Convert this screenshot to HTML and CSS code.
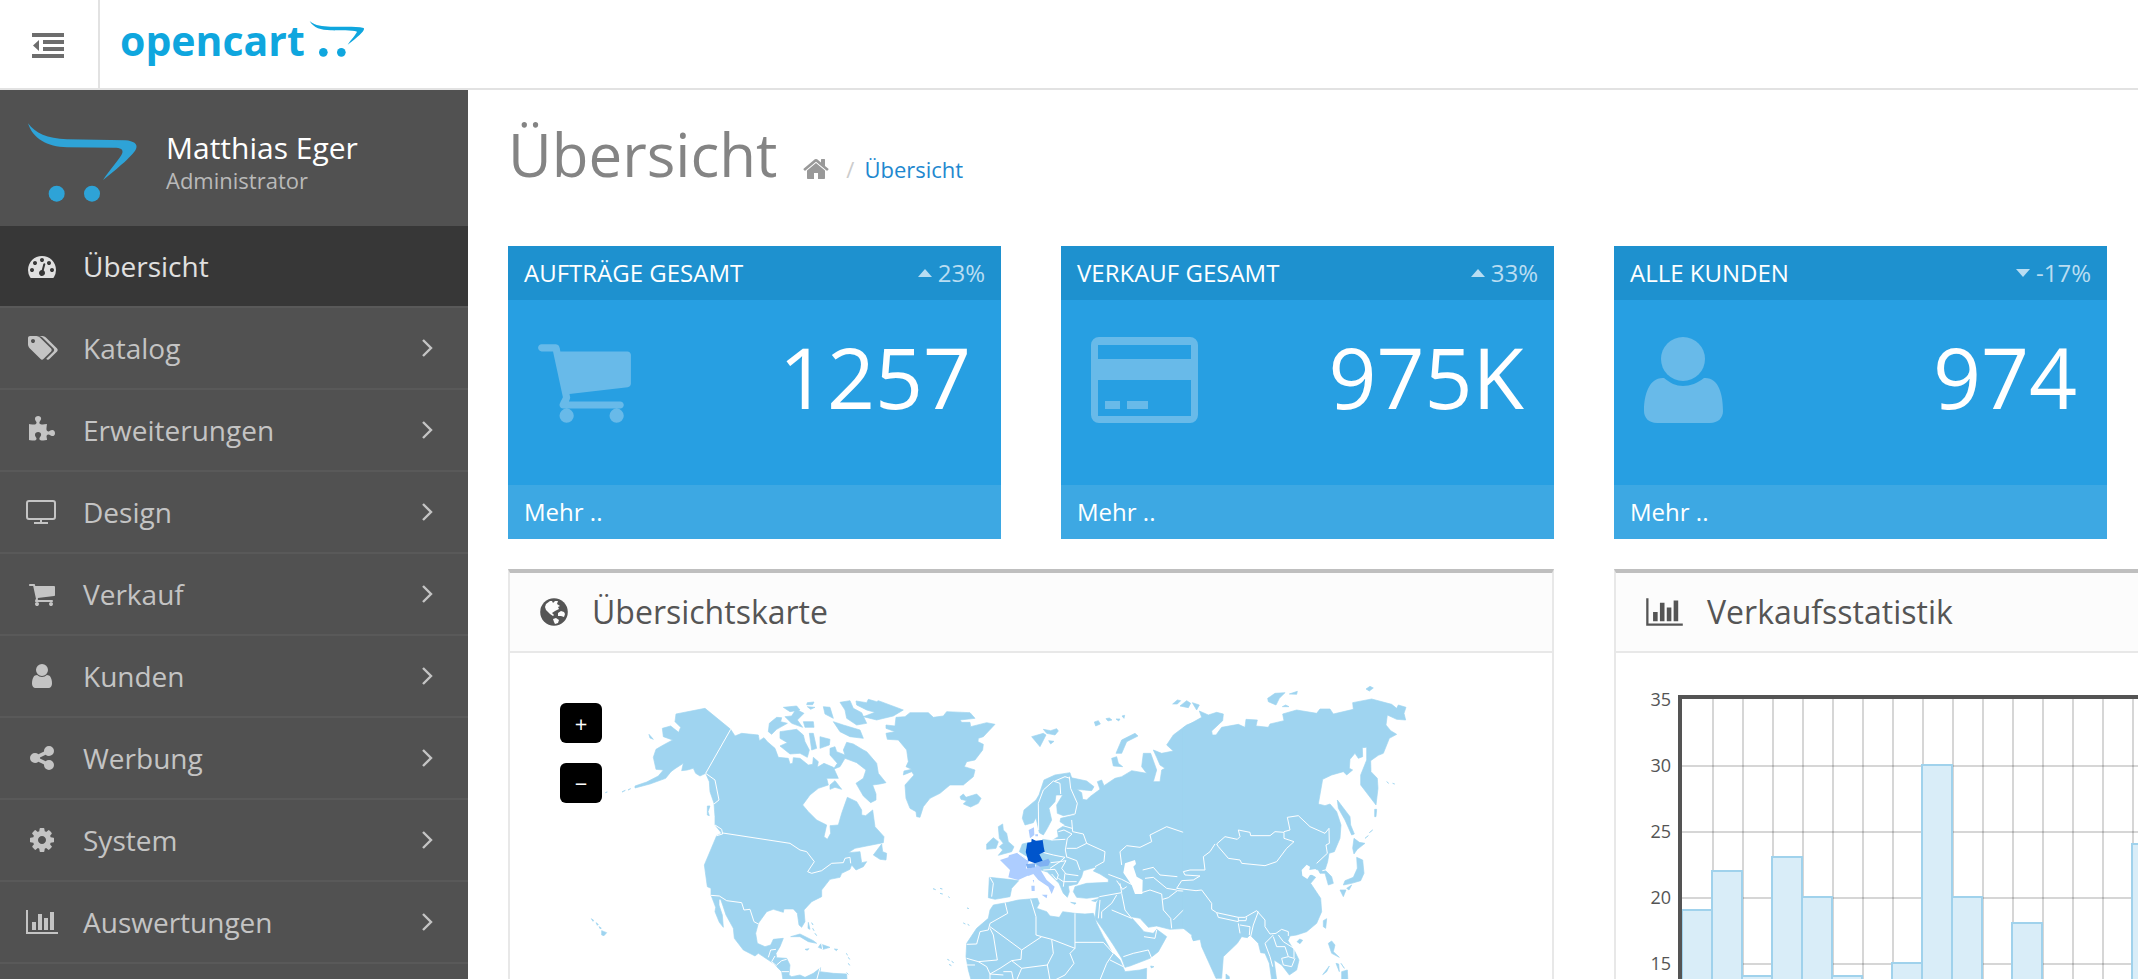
FILE: index.html
```html
<!DOCTYPE html>
<html lang="de">
<head>
<meta charset="utf-8">
<title>Übersicht</title>
<link rel="stylesheet" href="styles.css">
</head>
<body>
<svg class="sprite" aria-hidden="true">
  <symbol id="i-cart" viewBox="64 0 1664 1792"><path d="M704 1536q0 52-38 90t-90 38-90-38-38-90 38-90 90-38 90 38 38 90zm896 0q0 52-38 90t-90 38-90-38-38-90 38-90 90-38 90 38 38 90zm128-1088v512q0 24-16.5 42.5t-40.5 21.5l-1044 122q13 60 13 70 0 16-24 64h920q26 0 45 19t19 45-19 45-45 19h-1024q-26 0-45-19t-19-45q0-11 8-31.5t16-36 21.5-40 15.5-29.5l-177-823h-204q-26 0-45-19t-19-45 19-45 45-19h256q16 0 28.5 6.5t19.5 15.5 13 24.5 8 26 5.5 29.5 4.5 26h1201q26 0 45 19t19 45z"/></symbol>
  <symbol id="i-user" viewBox="256 0 1280 1792"><path d="M1536 1399q0 109-62.5 187t-150.5 78h-854q-88 0-150.5-78t-62.5-187q0-85 8.5-160.5t31.5-152 58.5-131 94-89 134.5-34.5q131 128 313 128t313-128q76 0 134.5 34.5t94 89 58.5 131 31.5 152 8.5 160.5zm-256-887q0 159-112.5 271.5t-271.5 112.5-271.5-112.5-112.5-271.5 112.5-271.5 271.5-112.5 271.5 112.5 112.5 271.5z"/></symbol>
  <symbol id="i-chart" viewBox="0 0 2048 1792"><path d="M640 896v512h-256v-512h256zm384-512v1024h-256v-1024h256zm1024 1152v128h-2048v-1536h128v1408h1920zm-640-896v768h-256v-768h256zm384-384v1152h-256v-1152h256z"/></symbol>
  <symbol id="i-angle" viewBox="0 0 12 18"><path d="M2 1l8 8-8 8" fill="none" stroke="currentColor" stroke-width="2.4"/></symbol>
</svg>

<header class="topbar">
  <button class="toggle" type="button" aria-label="Menü">
    <svg width="32" height="26" viewBox="0 0 32 26"><path d="M0 0h32v4H0zM11 7h21v4H11zM11 14h21v4H11zM0 21h32v4H0zM7 7v11L1 12.500z"/></svg>
  </button>
  <a class="brand" href="#" aria-label="opencart">
    <span class="brand-name">opencart</span>
    <svg width="56" height="38" viewBox="920 64 168 114"><path d="M922 67C940 82 960 83 985 84C1020 85 1060 82 1084 88C1090 94 1070 112 1036 138C1045 124 1062 106 1064 99C1050 94 1010 97 985 95C955 94 934 88 922 67Z"/><circle cx="963" cy="161" r="13"/><circle cx="1017" cy="161" r="13"/></svg>
  </a>
</header>

<div class="shell">
<nav class="sidebar">
  <div class="profile">
    <svg width="112" height="82" viewBox="80 364 336 246"><path d="M83 368C105 398 140 414 200 416L375 419C400 421 412 430 408 442C404 460 350 505 308 538C330 505 362 470 366 457C369 446 362 441 340 441L200 440C140 438 98 415 83 368Z"/><circle cx="169" cy="579" r="24"/><circle cx="275" cy="579" r="24"/></svg>
    <div>
      <h4 class="profile-name">Matthias Eger</h4>
      <small class="profile-role">Administrator</small>
    </div>
  </div>
  <ul class="menu">
    <li class="menu-item active"><a href="#"><span class="ico"><svg width="28" height="28" viewBox="0 0 1792 1792"><path d="M384 1152q0-53-37.500-90.500t-90.500-37.500-90.500 37.500-37.500 90.500 37.500 90.500 90.500 37.500 90.500-37.500 37.500-90.500zm192-448q0-53-37.500-90.500t-90.500-37.500-90.500 37.500-37.500 90.500 37.500 90.500 90.500 37.500 90.500-37.500 37.500-90.500zm428 481l101-382q6-26-7.500-48.500t-38.500-29.500-48 6.500-30 39.500l-101 382q-60 5-107 43.500t-63 98.500q-20 77 20 146t117 89 146-20 89-117q16-60-6-117t-72-91zm660-33q0-53-37.500-90.500t-90.500-37.500-90.500 37.500-37.500 90.500 37.500 90.500 90.500 37.500 90.500-37.500 37.500-90.500zm-640-640q0-53-37.500-90.500t-90.500-37.500-90.500 37.500-37.500 90.500 37.500 90.500 90.500 37.500 90.500-37.500 37.500-90.500zm448 192q0-53-37.500-90.500t-90.500-37.500-90.500 37.500-37.500 90.500 37.500 90.500 90.500 37.500 90.500-37.500 37.500-90.500zm320 448q0 261-141 483-19 29-54 29h-1402q-35 0-54-29-141-221-141-483 0-182 71-348t191-286 286-191 348-71 348 71 286 191 191 286 71 348z"/></svg></span><span class="label">Übersicht</span></a></li>
    <li class="menu-item"><a href="#"><span class="ico"><svg width="32" height="28" viewBox="0 0 2048 1792"><path d="M576 448q0-53-37.500-90.500t-90.500-37.500-90.500 37.500-37.500 90.500 37.500 90.500 90.500 37.500 90.500-37.500 37.500-90.500zm1067 576q0 53-37 90l-491 492q-39 37-91 37-53 0-90-37l-715-716q-38-37-64.500-101t-26.500-117v-416q0-52 38-90t90-38h416q53 0 117 26.500t102 64.500l715 714q37 39 37 91zm384 0q0 53-37 90l-491 492q-39 37-91 37-36 0-59-14t-53-45l470-470q37-37 37-90 0-52-37-91l-715-714q-38-38-102-64.500t-117-26.500h224q53 0 117 26.500t102 64.500l715 714q37 39 37 91z"/></svg></span><span class="label">Katalog</span><svg class="angle"><use href="#i-angle"/></svg></a></li>
    <li class="menu-item"><a href="#"><span class="ico"><svg width="28" height="28" viewBox="0 0 1792 1792"><path d="M1728 1098q0 81-44.500 135t-123.500 54q-41 0-77.500-17.500t-59-38-56.500-38-71-17.500q-110 0-110 124 0 39 16 115t15 115v5q-22 0-33 1-34 3-97.500 11.500t-115.500 13.500-98 5q-61 0-103-26.500t-42-83.500q0-37 17.500-71t38-56.500 38-59 17.500-77.500q0-79-54-123.500t-135-44.500q-84 0-143 45.500t-59 127.500q0 43 15 83t33.500 64.500 33.500 53 15 50.500q0 45-46 89-37 35-117 35-95 0-245-24-9-2-27.500-4t-27.500-4l-13-2q-1 0-3-1-2 0-2-1v-1024q2 1 17.500 3.500t34 5 21.500 3.500q150 24 245 24 80 0 117-35 46-44 46-89 0-22-15-50.500t-33.500-53-33.500-64.500-15-83q0-82 59-127.500t144-45.500q80 0 134 44.500t54 123.500q0 41-17.500 77.500t-38 59-38 56.500-17.500 71q0 57 42 83.500t103 26.500q64 0 180-15t163-17v2q-1 2-3.500 17.500t-5 34-3.500 21.500q-24 150-24 245 0 80 35 117 44 46 89 46 22 0 50.500-15t53-33.500 64.500-33.500 83-15q82 0 127.500 59t45.500 143z"/></svg></span><span class="label">Erweiterungen</span><svg class="angle"><use href="#i-angle"/></svg></a></li>
    <li class="menu-item"><a href="#"><span class="ico"><svg width="32" height="28" viewBox="0 0 32 28"><rect x="1" y="3" width="28" height="18" rx="2" fill="none" stroke="currentColor" stroke-width="2"/><path d="M14 21h2v3h6v2H8v-2h6z"/></svg></span><span class="label">Design</span><svg class="angle"><use href="#i-angle"/></svg></a></li>
    <li class="menu-item"><a href="#"><span class="ico"><svg width="26" height="28"><use href="#i-cart"/></svg></span><span class="label">Verkauf</span><svg class="angle"><use href="#i-angle"/></svg></a></li>
    <li class="menu-item"><a href="#"><span class="ico"><svg width="22" height="28"><use href="#i-user"/></svg></span><span class="label">Kunden</span><svg class="angle"><use href="#i-angle"/></svg></a></li>
    <li class="menu-item"><a href="#"><span class="ico"><svg width="28" height="28" viewBox="0 0 1792 1792"><path d="M1344 1024q133 0 226.500 93.500t93.500 226.500-93.500 226.500-226.500 93.500-226.500-93.500-93.500-226.500q0-12 2-34l-360-180q-92 86-218 86-133 0-226.500-93.500t-93.500-226.500 93.500-226.500 226.500-93.500q126 0 218 86l360-180q-2-22-2-34 0-133 93.500-226.500t226.500-93.500 226.500 93.500 93.500 226.500-93.500 226.500-226.500 93.500q-126 0-218-86l-360 180q2 22 2 34t-2 34l360 180q92-86 218-86z"/></svg></span><span class="label">Werbung</span><svg class="angle"><use href="#i-angle"/></svg></a></li>
    <li class="menu-item"><a href="#"><span class="ico"><svg width="28" height="28" viewBox="0 0 1792 1792"><path d="M1152 896q0-106-75-181t-181-75-181 75-75 181 75 181 181 75 181-75 75-181zm512-109v222q0 12-8 23t-20 13l-185 28q-19 54-39 91 35 50 107 138 10 12 10 25t-9 23q-27 37-99 108t-94 71q-12 0-26-9l-138-108q-44 23-91 38-16 136-29 186-7 28-36 28h-222q-14 0-24.500-8.500t-11.500-21.500l-28-184q-49-16-90-37l-141 107q-10 9-25 9-14 0-25-11-126-114-165-168-7-10-7-23 0-12 8-23 15-21 51-66.500t54-70.500q-27-50-41-99l-183-27q-13-2-21-12.500t-8-23.500v-222q0-12 8-23t19-13l186-28q14-46 39-92-40-57-107-138-10-12-10-24 0-10 9-23 26-36 98.500-107.500t94.500-71.500q13 0 26 10l138 107q44-23 91-38 16-136 29-186 7-28 36-28h222q14 0 24.500 8.500t11.500 21.500l28 184q49 16 90 37l142-107q9-9 24-9 13 0 25 10 129 119 165 170 7 8 7 22 0 12-8 23-15 21-51 66.500t-54 70.500q26 50 41 98l183 28q13 2 21 12.500t8 23.500z"/></svg></span><span class="label">System</span><svg class="angle"><use href="#i-angle"/></svg></a></li>
    <li class="menu-item"><a href="#"><span class="ico"><svg width="32" height="28"><use href="#i-chart"/></svg></span><span class="label">Auswertungen</span><svg class="angle"><use href="#i-angle"/></svg></a></li>
  </ul>
</nav>

<main class="content">
  <div class="page-header">
    <h1>Übersicht</h1>
    <nav class="breadcrumb">
      <a class="home" href="#" aria-label="Home"><svg width="28" height="28" viewBox="0 0 1792 1792"><path d="M1472 992v480q0 26-19 45t-45 19h-384v-384h-256v384h-384q-26 0-45-19t-19-45v-480q0-1 .5-3t.5-3l575-474 575 474q1 2 1 6zm223-69l-62 74q-8 9-21 11h-3q-13 0-21-7l-692-577-692 577q-12 8-24 7-13-2-21-11l-62-74q-8-10-7-23.500t11-21.500l719-599q32-26 76-26t76 26l244 204v-195q0-14 9-23t23-9h192q14 0 23 9t9 23v408l219 182q10 8 11 21.500t-7 23.500z"/></svg></a>
      <span class="slash">/</span>
      <a href="#">Übersicht</a>
    </nav>
  </div>

  <section class="tiles">
    <article class="tile">
      <div class="tile-heading"><span>AUFTRÄGE GESAMT</span><span class="trend"><svg width="14" height="8" viewBox="0 0 14 8"><path d="M0 8l7-8 7 8z"/></svg>23%</span></div>
      <div class="tile-body"><svg width="93" height="100"><use href="#i-cart"/></svg><span class="figure">1257</span></div>
      <div class="tile-footer"><a href="#">Mehr ..</a></div>
    </article>
    <article class="tile">
      <div class="tile-heading"><span>VERKAUF GESAMT</span><span class="trend"><svg width="14" height="8" viewBox="0 0 14 8"><path d="M0 8l7-8 7 8z"/></svg>33%</span></div>
      <div class="tile-body"><svg width="107" height="100" viewBox="0 0 107 100"><path fill-rule="evenodd" d="M8 7h91a8 8 0 0 1 8 8v70a8 8 0 0 1-8 8H8a8 8 0 0 1-8-8V15a8 8 0 0 1 8-8zM7 15v14h93V15zM7 50v36h93V50z"/><path d="M14 71h15v8H14zM36 71h21v8H36z"/></svg><span class="figure">975K</span></div>
      <div class="tile-footer"><a href="#">Mehr ..</a></div>
    </article>
    <article class="tile">
      <div class="tile-heading"><span>ALLE KUNDEN</span><span class="trend"><svg width="14" height="8" viewBox="0 0 14 8"><path d="M0 0l7 8 7-8z"/></svg>-17%</span></div>
      <div class="tile-body"><svg width="79" height="100" viewBox="0 0 79 100"><ellipse cx="39" cy="29" rx="22" ry="22"/><path d="M20 48C26 53 32 56 39 56S54 53 60 48C75 47 79 65 79 81C79 88 74 93 66 93H13C5 93 0 88 0 81C0 65 5 47 20 48Z"/></svg><span class="figure">974</span></div>
      <div class="tile-footer"><a href="#">Mehr ..</a></div>
    </article>
  </section>

  <section class="panels">
    <article class="panel">
      <div class="panel-heading">
        <svg width="28" height="28" viewBox="0 0 28 28"><circle cx="14" cy="14" r="13.800"/><path fill="#fcfcfc" d="M6 6L10 3L12 3L13 5L15 3L18 3L17 6L20 8L18 9L19 11L15 13L12 15L14 17L13 18L10 16L6 12L5 9ZM18 15L21 13L24 14L25 16L24 19L21 18L18 18ZM13 21L16 20L19 22L18 25L15 26L14 24Z"/></svg>
        <h3>Übersichtskarte</h3>
      </div>
      <div class="panel-body map">
        <div class="map-zoom"><button type="button">+</button><button type="button">−</button></div>
        <svg class="world" viewBox="540 683 982 480" role="img" aria-label="Weltkarte">
          <!-- America, Greenland, Iceland -->
          <g transform="translate(600 670) scale(.33333)">
            <g class="land">
              <path d="M228 132L315 115L392 178L317 310L300 318L287 310L280 295L262 300L245 302L250 280L225 296L213 305L197 325L150 342L105 354L105 348L140 336L175 318L190 300L168 298L160 262L168 238L190 225L218 210L190 200L187 175L212 168L236 187L242 172L225 155Z"/>
              <path d="M392 178L405 198L425 190L475 195L478 212L492 203L502 215L525 235L535 262L565 265L570 282L578 280L580 263L600 265L625 285L638 283L640 262L655 275L652 292L672 280L700 292L715 325L680 325L685 345L655 355L630 375L608 405L625 425L650 450L680 465L672 500L682 508L692 490L690 467L715 465L725 430L742 382L770 395L785 420L785 435L797 437L818 420L825 470L852 500L850 518L800 528L765 535L745 548L780 545L785 578L800 575L790 590L768 600L755 585L750 598L725 610L720 622L690 628L665 660L665 680L635 695L612 720L615 755L605 772L597 765L592 730L580 717L552 717L550 727L520 718L500 725L475 760L467 790L472 820L495 830L512 825L520 808L550 805L540 830L528 850L530 863L560 865L570 885L567 915L575 920L600 915L615 922L640 910L662 893L660 905L700 910L740 912L745 1000L560 1000L545 905L520 880L475 850L465 858L430 840L403 805L400 775L378 735L368 705L362 688L357 688L357 705L367 735L370 772L358 757L345 725L347 712L333 675L333 655L322 650L313 585L350 497L365 490L345 465L345 440L342 400L330 365L328 335L317 310Z"/>
              <path d="M540 185L590 178L610 195L615 215L628 240L622 262L600 250L570 252L540 228L562 218L540 205ZM505 185L508 160L530 142L545 143L542 155L562 160L530 178L515 193ZM550 112L590 108L600 120L570 125ZM555 140L575 138L588 118L612 130L592 150L608 172L575 160ZM622 98L642 96L638 104L620 104ZM622 110L645 112L632 118ZM610 155L640 155L642 172L615 172ZM670 110L690 112L700 145L675 132ZM700 155L730 165L780 180L790 205L750 200L720 185ZM628 190L640 190L650 235L635 240ZM660 200L690 208L688 225L660 235ZM720 97L750 92L760 115L785 128L800 160L770 165L740 145L735 120ZM768 93L800 98L805 88L830 95L835 92L910 120L880 138L830 150L790 140L825 127L800 120L770 105Z"/>
              <path d="M690 235L705 230L710 245L735 255L730 240L740 217L760 222L790 240L800 245L830 280L835 310L858 338L840 342L818 345L828 372L828 390L812 398L790 378L768 340L790 325L798 300L770 278L735 265L720 290L700 298L712 280L690 255ZM690 345L705 332L725 358L705 352L690 358ZM820 555L845 522L848 545L860 550L858 570L840 568Z"/>
              <path d="M888 142L915 140L930 128L985 128L1000 142L1030 138L1040 125L1110 128L1125 145L1080 150L1085 157L1110 157L1112 170L1160 158L1185 163L1150 200L1135 205L1134 215L1150 223L1148 240L1125 270L1100 275L1093 290L1125 300L1120 320L1090 345L1050 345L1020 370L990 385L970 410L960 442L950 440L948 425L930 415L918 385L915 345L942 315L935 305L910 315L912 303L935 298L918 290L925 275L920 240L895 210L862 208L858 190L885 185L858 175L858 165L885 168Z"/>
              <path d="M1080 380L1090 372L1098 382L1130 372L1143 385L1135 400L1112 411L1090 402L1100 392L1083 388ZM572 800L600 792L640 812L650 820L625 815L600 800ZM655 832L662 822L690 832L670 838ZM615 838L627 836L622 841ZM703 837L713 838L709 842ZM147 193L160 208L150 204ZM322 408L330 408L324 425L328 437L322 435ZM625 757L630 778L624 775ZM635 758L639 765ZM645 790L650 797ZM638 775L642 782ZM738 850L743 855ZM745 862l4 6zM745 880l4 6zM740 908l5 5zM66 366l10-5zM84 360l8-4zM16 368l6-2zM5 782L20 788L12 797L5 795ZM-26 746l7 5l-2 3zM-12 758l7 5l-3 3zM-3 770l7 4l-3 3zM999 656l8 3zM1020 655l7 2zM1020 670l8 2zM1045 680l4 3zM1101 714l6 2zM1090 759l6 3zM1103 763l5 3zM1042 868l6 3zM1055 874l6 4zM1047 883l7 4z"/>
            </g>
            <path class="border" d="M392 178L317 310L345 330L357 390L342 402M345 465L365 478L368 492L350 497M368 489L570 520L600 540L620 545L643 575L623 605L635 610L665 602L695 580L730 578L735 565L750 562L752 580M333 676L358 678L380 692L425 698L432 720L450 718L462 755L475 762M505 862L512 840L528 838M525 858L515 875L530 888M530 885L545 872L560 868M545 905L567 905M665 822L668 838M660 893L650 930"/>
          </g>
          <!-- Europe, Africa, western Asia -->
          <g transform="translate(940 670) scale(.33333)">
            <g class="land">
              <path d="M160 705L205 697L235 690L292 685L298 700L290 715L320 725L330 738L358 742L368 725L405 730L435 732L460 730L470 760L490 800L515 845L540 870L555 905L600 900L620 895L615 1100L140 1100L85 900L78 860L80 820L110 775L145 745L150 720Z"/>
              <path d="M175 470L188 462L190 480L200 490L205 515L222 530L215 545L175 556L188 540L178 530L190 520L178 505ZM140 522L160 503L175 515L168 535L140 538ZM148 622L205 628L236 632L215 655L210 680L165 688L145 683ZM238 545L247 522L265 518L265 562Z"/>
              <path d="M252 420L247 445L255 465L280 458L288 443L298 488L310 495L322 475L335 450L327 415L345 395L348 375L368 375L350 405L352 430L370 437L405 430L412 400L400 340L390 308L345 315L312 330L297 375L288 390Z"/>
              <path d="M405 435L412 400L388 322L440 333L462 350L455 362L410 358L425 368L428 388L440 390L450 380L480 358L472 335L485 330L492 347L525 325L545 320L575 302L620 310L605 290L610 250L632 250L650 300L640 335L660 335L665 300L675 295L660 285L650 262L640 240L665 250L700 243L680 225L700 195L740 165L785 148L785 808L760 812L755 800L765 790L745 775L690 778L650 768L625 772L600 745L572 740L590 760L612 785L640 790L650 778L680 800L655 845L630 865L570 888L555 892L545 865L520 825L490 780L465 745L470 700L478 680L440 685L410 682L400 665L405 650L440 640L505 637L505 628L480 612L460 603L472 590L445 598L430 602L425 620L412 642L385 648L388 665L382 682L370 670L357 640L322 606L295 598L285 580L300 545L308 508L335 512L355 500L352 480L375 465L360 455L362 445Z"/>
              <path d="M275 200L310 190L318 195L300 230L285 212ZM310 178L332 182L350 176L355 183L345 195L320 190ZM326 212l16 2l-10 8zM463 156l12-4l6 10l-14 6zM498 146l10-2l8 6l-12 3zM528 147l12 0l-4 6zM546 138l8-2l-2 9zM528 250L545 210L585 190L594 198L560 215L545 250ZM515 265L530 260L535 280L548 290L520 288ZM698 102L712 90L722 92L712 102ZM720 108L740 92L752 100L745 113ZM757 98L778 105L770 120ZM392 697L408 699L405 703ZM455 692l20-6l-8 9zM632 888l10 2l-8 4z"/>
            </g>
            <path class="sea" d="M555 580L585 570L588 582L580 590L590 620L608 630L607 672L585 672L575 645L550 608Z"/>
            <g class="light">
              <path d="M180 570L205 562L207 556L232 548L268 572L258 592L268 615L235 630L205 622L210 600ZM260 598L300 585L303 602L320 630L344 650L335 672L325 650L295 630L280 612L265 618ZM305 674L322 674L320 685ZM274 647h10v16h-9zM278 630h4v9zM266 480L282 472L283 495L270 505ZM286 493h8v6h-8z"/>
            </g>
            <path class="mid" d="M258 582L285 580L285 592L262 596ZM285 580L305 574L325 566L330 575L325 587L300 590Z"/>
            <path class="border" d="M195 697L203 730L150 760L145 780L120 785L110 822L80 823M150 770L245 840L305 800L335 808L405 835L405 730M405 817L490 817M272 688L288 740L288 795L305 800M150 775L160 795L172 870L115 875L80 865M245 840L243 868L215 872L180 895L150 912L140 890L115 875M335 808L340 850L322 885L245 895L215 872M405 835L390 850L402 880L375 915L345 930M490 817L520 850L500 880L480 930M510 870L550 890M190 905L215 905L220 930M322 885L330 930M150 930L150 912L190 915M245 895L230 930M80 885L105 885M150 622L160 640L155 680"/>
            <path class="border" d="M296 480L295 400L310 360L340 333L360 340L362 372M345 333L375 320L390 325M388 320L392 355L412 400L405 432M395 450L398 485L430 492L440 520L495 545L492 575L465 590M355 485L372 480L396 492L382 505L376 540L380 560M362 465L396 475M335 510L376 508M440 520L410 535L380 535M378 560L410 572L420 600M300 545L340 555L375 562L360 575L332 578M330 595L360 575L378 572L365 595L378 612L415 617M310 600L345 598L355 615L350 630L335 612M355 625L370 635L410 635M375 610L370 650M545 585L540 545L560 527L600 532L635 515L630 495L680 470L730 487L770 510L830 522L810 545L795 580L790 605M505 613L545 628L578 645M530 632L548 658L560 650M540 640L545 668L478 680M545 670L555 720L575 745M485 745L485 725L515 700L530 675M515 720L575 745M480 690L475 745M550 860L580 850L625 840L635 865M612 800L645 805L650 780M605 668L630 660L665 672L670 720L692 745L695 775M608 600L640 592L660 615L712 620M615 625L640 622L680 655L710 660M668 688L685 683L712 662L755 665L750 690L735 715L700 750M800 685L775 690L785 720L755 760L765 785M232 548L262 570M265 520L258 545"/>
            <path class="top" d="M262 518L274 516L275 506L288 512L308 510L311 530L314 545L298 553L308 572L285 580L265 572L257 545Z"/>
          </g>
          <!-- eastern Asia -->
          <g transform="translate(1150 670) scale(.33333)">
            <g class="land">
              <path d="M100 173L155 142L148 123L175 135L200 127L220 132L218 152L185 183L187 195L198 195L215 172L265 163L285 172L288 148L322 150L318 168L355 172L360 162L402 152L398 132L440 120L500 130L510 117L540 117L550 132L610 118L608 98L665 87L725 103L740 115L745 105L768 112L762 130L767 150L740 148L712 135L708 165L722 182L740 193L718 205L700 250L685 256L662 272L663 305L682 325L684 355L678 405L632 345L632 315L650 270L650 232L637 233L638 260L625 265L615 250L600 268L598 295L608 300L590 315L580 305L545 315L518 328L505 402L525 407L540 402L560 425L573 465L570 505L553 545L537 550L533 575L525 600L545 620L550 640L535 645L525 610L510 610L505 600L497 598L480 612L497 622L482 640L512 685L515 725L500 760L470 785L440 795L420 798L414 812L435 845L447 870L440 900L418 915L395 885L372 870L380 930L365 930L358 880L345 850L332 848L325 820L300 795L292 803L275 800L262 820L220 860L215 925L198 925L155 830L150 805L130 812L125 795L100 775Z"/>
              <path d="M562 390L600 440L602 465L613 492L605 495L585 450L565 415ZM612 505L628 517L645 520L622 538L612 552L608 535ZM620 562L638 570L642 610L632 632L605 640L580 645L585 632L610 622L622 595ZM570 660L588 660L580 680ZM590 655L605 645L597 660ZM520 752L530 746L527 775L520 770ZM441 815l8-8l9 4l-8 10zM535 820L545 813L555 825L550 845L568 862L545 850ZM558 880L566 882L568 905ZM573 880l10 15zM575 905L592 900L597 990L575 930ZM518 914L538 888L530 905ZM228 912L238 920L238 930L228 930ZM353 85L375 70L405 68L388 85L378 105L355 95ZM418 72L442 64L440 73ZM397 110l10-5l10 5zM648 57l12-8l10 5l-12 9zM674 418l6 0l-2 22l-4 0zM658 488l10-8zM645 505l10-8zM710 335l6 5zM728 340l6 2z"/>
            </g>
            <path class="sea" d="M455 600L470 584L480 590L478 600L497 597L500 612L480 615L472 627L457 617Z"/>
            <path class="border" d="M200 522L225 500L262 508L270 500L265 480L300 487L302 497L360 497L375 485L402 487L402 505L432 515L410 535L380 575L345 587L275 580L270 570L235 565L205 530ZM402 485L420 480L412 442L445 437L480 470L525 490L537 475L538 520L528 525L532 550L500 580M517 602L535 598M195 522L180 545L160 560L165 600L120 600L100 605L105 615L150 618L130 630L95 632L80 655L138 662L155 660L185 700L185 718L200 728L265 742L285 742L320 722L345 750L345 770L360 792L378 790L395 778L415 785L415 798M200 728L205 742L265 755L265 742M265 752L288 752L290 742M265 760L270 790M270 765L300 770L298 795M325 725L310 765L302 800M370 795L345 820L360 860L368 890M370 800L380 830L405 830L415 860L432 865L432 835L400 815L385 795M415 860L395 865L400 885L425 890L435 865"/>
          </g>
        </svg>
      </div>
    </article>

    <article class="panel panel-wide">
      <div class="panel-heading">
        <svg width="37" height="32"><use href="#i-chart"/></svg>
        <h3>Verkaufsstatistik</h3>
      </div>
      <div class="panel-body">
        <svg class="chart" width="1000" height="500" viewBox="1646 683 1000 500" role="img" aria-label="Verkaufsstatistik"></svg>
      </div>
    </article>
  </section>
</main>
</div>
<script src="chart.js"></script>
</body>
</html>
```

FILE: chart.js
```js
// Draws the grid, bars and scale of the sales chart.
const NS = 'http://www.w3.org/2000/svg';
const svg = document.querySelector('.chart');
const values = [19, 22, 14, 23, 20, 14, 9, 15, 30, 20, 11, 18, 8, 12, 10, 24];
const left = 1682, top0 = 700, base = 1162, step = 30, tick = 66;

function add(name, attrs, text) {
  const el = document.createElementNS(NS, name);
  for (const key in attrs) el.setAttribute(key, attrs[key]);
  if (text) el.textContent = text;
  svg.appendChild(el);
}

for (let i = 1; i < 32; i++) {
  add('path', { class: 'grid', d: `M${left + 1 + i * step} 698V${base}` });
}
for (let i = 1; i < 7; i++) {
  add('path', { class: 'grid', d: `M${left} ${top0 + i * tick}H2646` });
}
values.forEach((v, i) => {
  const y = Math.round(base - v * tick / 5) - 1;
  add('rect', { class: 'bar', x: left + i * step, y: y, width: step, height: base - y });
});
add('path', { class: 'frame', d: `M1680 ${base}V697H2646` });
for (let v = 35; v >= 15; v -= 5) {
  add('text', { class: 'scale', x: 1671, y: base + 6 - v * tick / 5, 'text-anchor': 'end' }, String(v));
}
```

FILE: styles.css
```css
* { box-sizing: border-box; }

body {
  margin: 0;
  height: 100vh;
  display: flex;
  flex-direction: column;
  overflow: hidden;
  background: #fff;
  color: #555;
  font: 24px/34px "Open Sans", sans-serif;
}

h1, h3, h4 { margin: 0; font-weight: 400; }
a { color: inherit; text-decoration: none; }
svg { fill: currentColor; display: block; flex: none; }
.sprite { display: none; }

.topbar {
  flex: none;
  display: flex;
  height: 90px;
  border-bottom: 2px solid #e2e2e2;
}
.toggle {
  width: 100px;
  padding: 4px 0 0 32px;
  border: 0;
  border-right: 2px solid #e2e2e2;
  background: none;
  color: #6d6d6d;
}
.brand {
  display: flex;
  align-items: flex-start;
  gap: 4px;
  padding: 20px;
  color: #0fa6de;
}
.brand-name {
  font-size: 41px;
  line-height: 40px;
  font-weight: 700;
}

.shell { flex: 1; display: flex; min-height: 0; }

.sidebar {
  flex: none;
  width: 468px;
  background: #515151;
  color: #c4c4c4;
  overflow: hidden;
}
.profile {
  display: flex;
  align-items: center;
  gap: 27px;
  height: 136px;
  padding: 10px 26px 0 27px;
}
.profile svg { color: #2ea3d7; }
.profile-name { color: #fff; font-size: 30px; line-height: 34px; }
.profile-role { display: block; color: #b9b9b9; font-size: 22px; line-height: 30px; }

.menu { margin: 0; padding: 0; list-style: none; }
.menu-item { border-bottom: 2px solid #595959; }
.menu-item a {
  display: flex;
  align-items: center;
  height: 80px;
  padding: 0 35px 0 24px;
  font-size: 28px;
}
.menu-item.active { background: #373737; color: #e0e0e0; }
.ico { display: flex; justify-content: center; width: 36px; margin-right: 23px; }
.label { flex: 1; }
.angle { width: 12px; height: 18px; }

.content {
  flex: 1;
  min-width: 0;
  padding: 0 31px 0 40px;
  overflow: hidden;
}
.page-header {
  display: flex;
  align-items: flex-start;
  gap: 25px;
  height: 156px;
  padding-top: 22px;
}
h1 { color: #848484; font-size: 60px; line-height: 84px; }
.breadcrumb {
  display: flex;
  align-items: center;
  padding-top: 40px;
  font-size: 22px;
  color: #1e88cf;
}
.home { color: #999; }
.slash { color: #ccc; padding: 0 10px 0 16px; }

.tiles, .panels {
  display: grid;
  grid-template-columns: repeat(3, minmax(0, 1fr));
  gap: 60px;
}
.tile { background: #279fe2; color: #fff; }
.tile-heading, .tile-footer { padding: 10px 16px; }
.tile-heading { display: flex; justify-content: space-between; background: #1e91cf; }
.trend { display: flex; align-items: center; gap: 6px; color: #b9ddf2; }
.tile-body {
  display: flex;
  justify-content: space-between;
  height: 185px;
  padding: 30px;
}
.tile-body svg { color: #68bae9; }
.figure { font-size: 84px; line-height: 94px; }
.tile-footer { background: #3da8e3; }

.panels { margin-top: 30px; }
.panel {
  grid-column: span 2;
  border: 2px solid #e8e8e8;
  border-top: 4px solid #bfbfbf;
}
.panel-wide { grid-column: span 1; margin-right: -553px; }
.panel-heading {
  display: flex;
  align-items: center;
  gap: 24px;
  height: 80px;
  padding: 0 30px;
  border-bottom: 2px solid #e8e8e8;
  background: #fcfcfc;
}
.panel-heading h3 { font-size: 32px; line-height: 40px; }
.panel-body { padding: 30px; }

.map { position: relative; }
.map-zoom {
  position: absolute;
  top: 50px;
  left: 50px;
  display: grid;
  gap: 20px;
}
.map-zoom button {
  width: 42px;
  height: 40px;
  padding: 0;
  border: 0;
  border-radius: 6px;
  background: #000;
  color: #fff;
  font: 22px/40px "Open Sans", sans-serif;
}
.world { width: 100%; height: auto; }
.land { fill: #9fd4f0; stroke: #9fd4f0; stroke-width: 2; }
.sea { fill: #fff; }
.light { fill: #adcdff; }
.mid { fill: #7fb1f2; }
.top { fill: #0055cc; }
.border { fill: none; stroke: #fff; stroke-width: 3; stroke-linejoin: round; }

.grid { stroke: rgba(0, 0, 0, .16); stroke-width: 2; fill: none; }
.bar { fill: #d9edf8; stroke: #a0d2ec; stroke-width: 2; }
.frame { stroke: #545454; stroke-width: 4; fill: none; }
.scale { fill: #545454; font: 18px "Open Sans", sans-serif; }
```
